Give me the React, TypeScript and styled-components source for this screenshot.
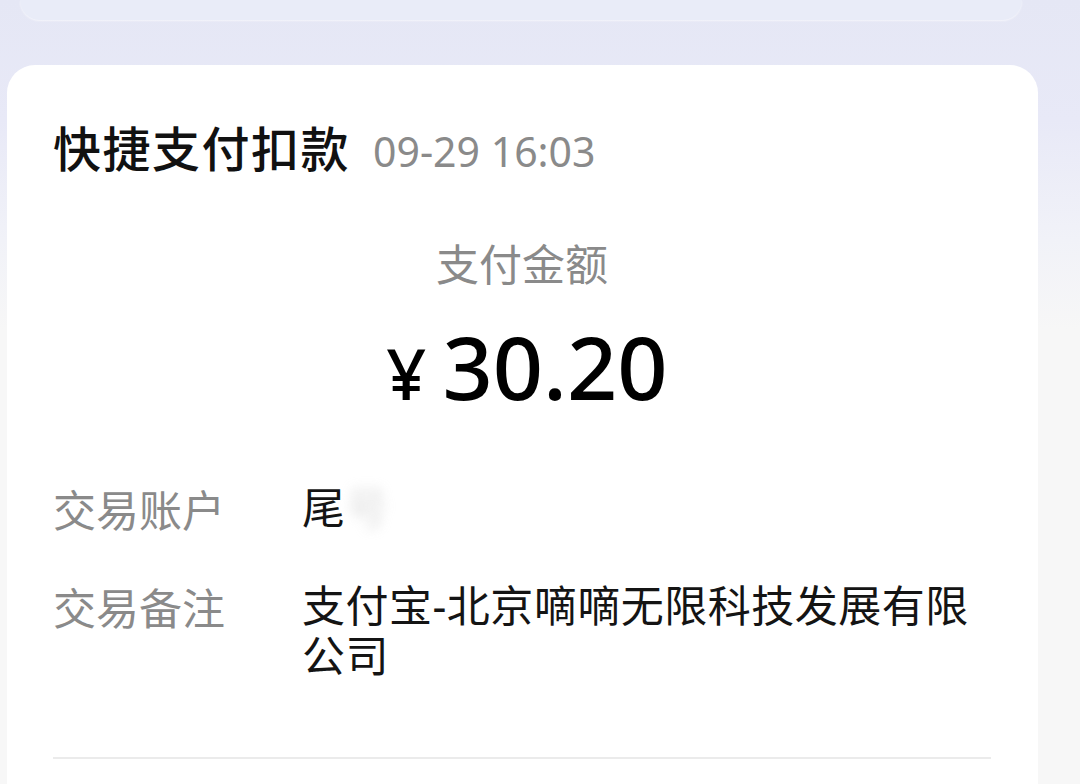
import React from "react";
import styled, { createGlobalStyle } from "styled-components";

const GlobalStyle = createGlobalStyle`
  html, body {
    margin: 0;
    padding: 0;
  }
  body {
    font-family: "Noto Sans", "Noto Sans CJK SC", sans-serif;
    background: #f7f7f7;
    overflow: hidden;
  }
`;

const Page = styled.div`
  height: 784px;
  overflow: hidden;
  background: linear-gradient(
    180deg,
    #e5e7f5 0px,
    #e8e9f7 120px,
    #f1f2f8 240px,
    #f7f7f7 330px,
    #f7f7f7 100%
  );
`;

const TopCard = styled.div`
  height: 20px;
  margin: 0 58px 0 20px;
  background: #e9ecf8;
  border-radius: 0 0 28px 28px;
  box-shadow: 0 1px 2px rgba(255, 255, 255, 0.6);
`;

const Card = styled.section`
  margin: 45px 42px 0 7px;
  min-height: 760px;
  padding: 52px 47px 0 46px;
  background: #ffffff;
  border-radius: 28px 28px 0 0;
  box-sizing: border-box;
`;

const Header = styled.div`
  display: flex;
  align-items: baseline;
  gap: 23px;
`;

const Title = styled.h1`
  margin: 0;
  font-family: "Noto Sans CJK SC", sans-serif;
  font-size: 48px;
  line-height: 58px;
  letter-spacing: 1.5px;
  font-weight: 500;
  color: #111111;
`;

const Time = styled.span`
  font-family: "Noto Sans", sans-serif;
  font-size: 41px;
  color: #8a8a8a;
`;

const AmountLabel = styled.div`
  margin-top: 57px;
  text-align: center;
  font-family: "Noto Sans CJK SC", sans-serif;
  font-size: 43px;
  line-height: 52px;
  color: #8a8a8a;
`;

const AmountRow = styled.div`
  margin-top: 34px;
  display: flex;
  justify-content: center;
  align-items: baseline;
  gap: 16px;
  padding-left: 10px;
  font-family: "Noto Sans", sans-serif;
  color: #000000;
  line-height: 88px;
`;

const Currency = styled.span`
  font-size: 70px;
  font-weight: 500;
`;

const Amount = styled.span`
  font-size: 88px;
  font-weight: 500;
`;

const Details = styled.dl`
  margin: 66px 0 0;
  display: grid;
  grid-template-columns: 249px 1fr;
  row-gap: 48px;
  font-size: 43px;
  line-height: 50px;
`;

const Label = styled.dt`
  margin: 0;
  font-family: "Noto Sans CJK SC", sans-serif;
  color: #8a8a8a;
`;

const Value = styled.dd`
  margin: 0;
  font-family: "Noto Sans", "Noto Sans CJK SC", sans-serif;
  letter-spacing: 0.5px;
  color: #141414;
`;

const Masked = styled.span`
  display: inline-block;
  color: #c8c8c8;
  filter: blur(6px);
  opacity: 0.6;
`;

const Divider = styled.hr`
  margin: 76px 0 0;
  border: 0;
  height: 2px;
  background: #ebebeb;
`;

export default function App() {
  return (
    <>
      <GlobalStyle />
      <Page>
        <TopCard />
        <Card>
          <Header>
            <Title>快捷支付扣款</Title>
            <Time>09-29 16:03</Time>
          </Header>
          <AmountLabel>支付金额</AmountLabel>
          <AmountRow>
            <Currency>¥</Currency>
            <Amount>30.20</Amount>
          </AmountRow>
          <Details>
            <Label>交易账户</Label>
            <Value>
              尾<Masked>号</Masked>
            </Value>
            <Label>交易备注</Label>
            <Value>支付宝-北京嘀嘀无限科技发展有限公司</Value>
          </Details>
          <Divider />
        </Card>
      </Page>
    </>
  );
}
